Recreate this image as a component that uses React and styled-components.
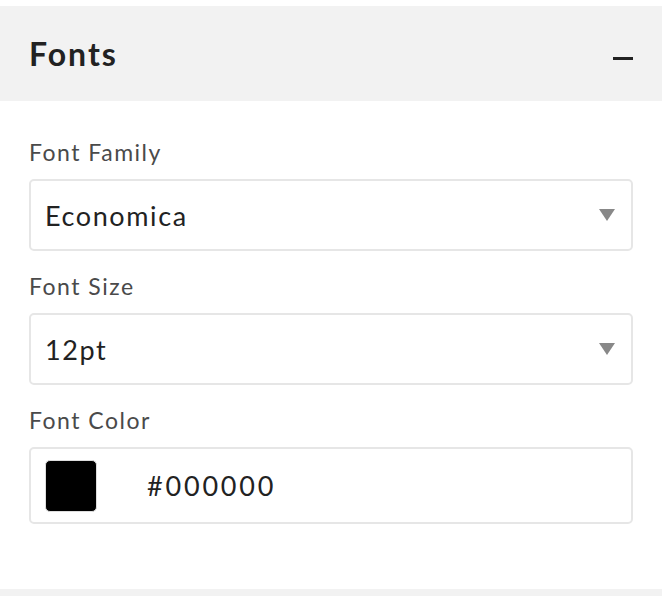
import React from 'react'
import styled, { createGlobalStyle } from 'styled-components'

const GlobalStyle = createGlobalStyle`
  body {
    margin: 0;
    background: #ffffff;
    font-family: Lato, "Liberation Sans", sans-serif;
  }
`

const Panel = styled.div`
  width: 662px;
  padding-top: 6px;
  background: #fff;
`

const Header = styled.div`
  display: flex;
  align-items: center;
  justify-content: space-between;
  height: 95px;
  padding: 0 29px 0 29px;
  background: #f2f2f2;
  box-sizing: border-box;
`

const Title = styled.h2`
  margin: 0;
  font-size: 32px;
  font-weight: 700;
  color: #222;
  letter-spacing: 2px;
`

const Collapse = styled.span`
  display: block;
  width: 20px;
  height: 3px;
  margin-top: 10px;
  background: #222;
`

const Body = styled.div`
  display: flex;
  flex-direction: column;
  gap: 22px;
  padding: 38px 29px 65px 29px;
`

const Field = styled.div`
  display: flex;
  flex-direction: column;
  gap: 14px;
`

const Label = styled.label`
  font-size: 23px;
  line-height: 26px;
  color: #4a4a4a;
  letter-spacing: 1.5px;
`

const Box = styled.div`
  display: flex;
  align-items: center;
  height: ${p => p.$h}px;
  padding: 0 16px 0 14px;
  border: 2px solid #e6e6e6;
  border-radius: 5px;
  box-sizing: border-box;
  font-size: 27px;
  color: #222;
  letter-spacing: 1.6px;
`

const Value = styled.span`
  flex: 1;
  letter-spacing: ${p => (p.$mono ? '2.8px' : 'inherit')};
`

const Caret = styled.span`
  width: 0;
  height: 0;
  border-left: 8px solid transparent;
  border-right: 8px solid transparent;
  border-top: 12px solid #888;
`

const Swatch = styled.span`
  width: 52px;
  height: 52px;
  margin-right: 50px;
  border: 1px solid #ddd;
  border-radius: 5px;
  background: ${p => p.$color};
  box-sizing: border-box;
`

const Footer = styled.div`
  height: 8px;
  background: #f2f2f2;
`

function Select({ value }) {
  return (
    <Box $h={72}>
      <Value>{value}</Value>
      <Caret />
    </Box>
  )
}

export default function App() {
  const color = '#000000'
  return (
    <Panel>
      <GlobalStyle />
      <Header>
        <Title>Fonts</Title>
        <Collapse />
      </Header>
      <Body>
        <Field>
          <Label>Font Family</Label>
          <Select value="Economica" />
        </Field>
        <Field>
          <Label>Font Size</Label>
          <Select value="12pt" />
        </Field>
        <Field>
          <Label>Font Color</Label>
          <Box $h={77}>
            <Swatch $color={color} />
            <Value $mono>{color}</Value>
          </Box>
        </Field>
      </Body>
      <Footer />
    </Panel>
  )
}
